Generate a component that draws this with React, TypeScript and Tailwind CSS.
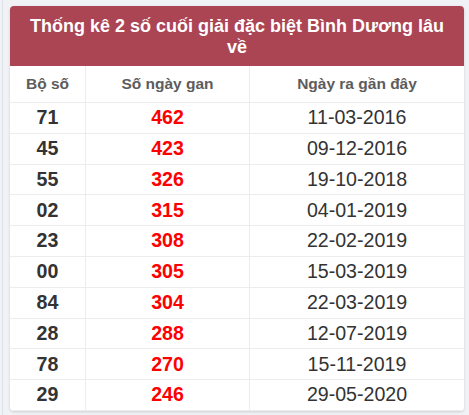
import React from "react";

const rows: [string, string, string][] = [
  ["71", "462", "11-03-2016"],
  ["45", "423", "09-12-2016"],
  ["55", "326", "19-10-2018"],
  ["02", "315", "04-01-2019"],
  ["23", "308", "22-02-2019"],
  ["00", "305", "15-03-2019"],
  ["84", "304", "22-03-2019"],
  ["28", "288", "12-07-2019"],
  ["78", "270", "15-11-2019"],
  ["29", "246", "29-05-2020"],
];

export default function App() {
  return (
    <div
      className="w-[469px] h-[415px] bg-[#f0f2f5] pl-[2px] overflow-hidden"
      style={{ fontFamily: '"Liberation Sans", Arial, sans-serif' }}
    >
      <div className="h-full border-l border-[#dce2ea] pl-[7px] pt-[6px] pr-[5px]">
        <div className="w-[454px] bg-white rounded-[4px] overflow-hidden shadow-[0_1px_3px_rgba(0,0,0,0.15)]">
          <div className="bg-[#ab4554] h-[60px] pt-[10px] px-[10px] text-white font-bold text-[18px] leading-[21px] text-center">
            Thống kê 2 số cuối giải đặc biệt Bình Dương lâu về
          </div>
          <div className="grid grid-cols-[76px_164px_214px]">
            <div className="h-[37px] flex items-center justify-center text-[15.5px] font-bold text-[#5c5c5c] border-b border-r border-[#ececec]">
              Bộ số
            </div>
            <div className="h-[37px] flex items-center justify-center text-[15.5px] font-bold text-[#5c5c5c] border-b border-r border-[#ececec]">
              Số ngày gan
            </div>
            <div className="h-[37px] flex items-center justify-center text-[15.5px] font-bold text-[#5c5c5c] border-b border-[#ececec]">
              Ngày ra gần đây
            </div>
            {rows.map(([a, b, c], i) => (
              <React.Fragment key={i}>
                <div className="h-[30.8px] flex items-center justify-center text-[19.6px] font-bold text-[#333] border-b border-r border-[#ececec]">
                  {a}
                </div>
                <div className="h-[30.8px] flex items-center justify-center text-[19.6px] font-bold text-[#ff0000] border-b border-r border-[#ececec]">
                  {b}
                </div>
                <div className="h-[30.8px] flex items-center justify-center text-[19.6px] text-[#333] border-b border-[#ececec]">
                  {c}
                </div>
              </React.Fragment>
            ))}
          </div>
        </div>
      </div>
    </div>
  );
}
